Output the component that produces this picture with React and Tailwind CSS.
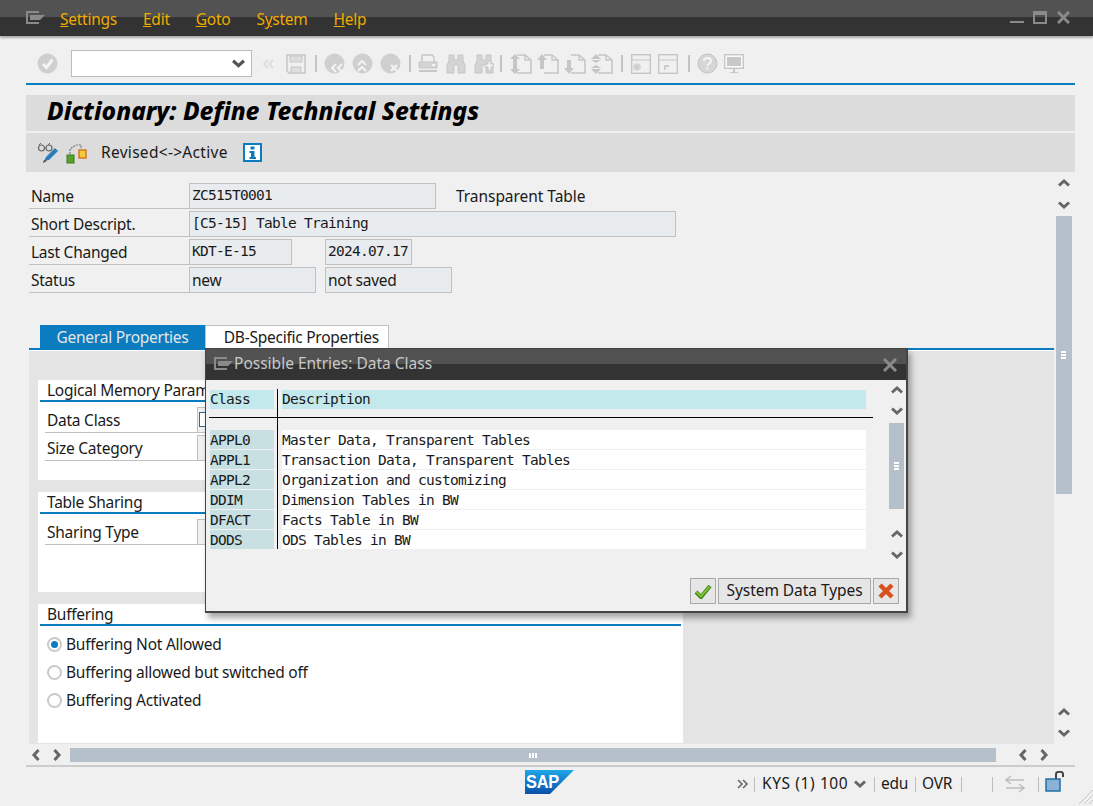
const MenuIcon = ({ className }) => (
  <svg width="19" height="13" viewBox="0 0 19 13" className={className}>
    <path d="M0 0h13v2H2v9h11v2H0z" fill="#8a8a8a" />
    <path d="M4 4h15l-5 5H4z" fill="#8a8a8a" />
  </svg>
);

const Chevron = ({ dir = "down", color = "#666666", size = 12 }) => {
  const pts = {
    down: "1,3.500 6,8 11,3.500",
    up: "1,8.500 6,4 11,8.500",
    left: "8.500,1 4,6 8.500,11",
    right: "3.500,1 8,6 3.500,11",
  };
  return (
    <svg width={size} height={size} viewBox="0 0 12 12">
      <polyline points={pts[dir]} fill="none" stroke={color} strokeWidth="3" />
    </svg>
  );
};

const Sep = () => <div className="w-[2px] h-[17px] bg-[#c4c4c4]" />;

const Gy = "#c6c6c6";

const Circle = ({ children }) => (
  <svg width="21" height="21" viewBox="0 0 21 21">
    <circle cx="10.5" cy="10.5" r="10" fill="#cfcfcf" />
    {children}
  </svg>
);

const Page = ({ children }) => (
  <svg width="22" height="20" viewBox="0 0 22 20">
    <path d="M7 1h8l6 5v13H7" fill="none" stroke={Gy} strokeWidth="1.6" />
    <path d="M15 1v5h6" fill="none" stroke={Gy} strokeWidth="1.4" />
    {children}
  </svg>
);

const Binoc = ({ plus }) => (
  <svg width="20" height="20" viewBox="0 0 20 20">
    <path d="M3 1h5v5h4V1h5v6l2 4v8h-7v-8H8v8H1v-8l2-4z" fill="#d4d4d4" stroke={Gy} strokeWidth="1" />
    {plus && <path d="M11 10h3V7h3v3h3v3h-3v4h-3v-4h-3z" fill="#f0f0f0" stroke={Gy} />}
  </svg>
);

const Window = ({ children }) => (
  <svg width="20" height="20" viewBox="0 0 20 20">
    <rect x="0.7" y="0.7" width="18.6" height="18.6" fill="none" stroke={Gy} strokeWidth="1.4" />
    <path d="M1 6h18" stroke={Gy} />
    {children}
  </svg>
);

const Toolbar = () => (
  <div className="h-[49px] border-b-2 border-[#0a7cbf] flex items-center pt-[8px]">
    <div className="ml-[11px] w-[21px]">
      <Circle>
        <polyline points="6,11 9.5,14.5 15.5,6.5" fill="none" stroke="#f4f4f4" strokeWidth="3" />
      </Circle>
    </div>
    <div className="ml-[13px] w-[181px] h-[27px] bg-white border border-[#bcbcbc] flex items-center justify-end pr-[6px]">
      <Chevron color="#555555" size={13} />
    </div>
    <div className="ml-[11px] w-[12px] text-center">
      <svg width="12" height="10" viewBox="0 0 12 10">
        <path d="M5 1 1 5l4 4M10 1 6 5l4 4" fill="none" stroke="#dcdcdc" strokeWidth="2" />
      </svg>
    </div>
    <div className="ml-[11px] w-[20px]">
      <svg width="20" height="20" viewBox="0 0 20 20">
        <path d="M1 1h18v18H3l-2-2z" fill="none" stroke={Gy} strokeWidth="1.5" />
        <path d="M4 2h12v6H4zM5 13h10v6H5z" fill="#dedede" stroke={Gy} />
      </svg>
    </div>
    <div className="ml-[9px]"><Sep /></div>
    <div className="ml-[7px] flex gap-[7px]">
      <Circle><path d="M12 11l-4 4 4 4M18 11l-4 4 4 4" fill="none" stroke="#f4f4f4" strokeWidth="2" /></Circle>
      <Circle><path d="M6 12l4-4 4 4M6 18l4-4 4 4" fill="none" stroke="#f4f4f4" strokeWidth="2" /></Circle>
      <Circle><path d="M11 12l6 6M17 12l-6 6" fill="none" stroke="#f4f4f4" strokeWidth="2.4" /></Circle>
    </div>
    <div className="ml-[8px]"><Sep /></div>
    <div className="ml-[7px]">
      <svg width="20" height="20" viewBox="0 0 20 20">
        <path d="M4 8V1h10l2 2v5" fill="none" stroke={Gy} strokeWidth="1.4" />
        <path d="M1 8h18v6H1z" fill="#d4d4d4" stroke={Gy} />
        <path d="M1 17h18" stroke={Gy} strokeWidth="2" />
        <rect x="14" y="10" width="3" height="2" fill="#f4f4f4" />
      </svg>
    </div>
    <div className="ml-[8px] flex gap-[8px]">
      <Binoc />
      <Binoc plus />
    </div>
    <div className="ml-[6px]"><Sep /></div>
    <div className="ml-[8px] flex gap-[5px]">
      <Page><path d="M5 0 0 5h3v10H0l5 5 5-5H7V5h3z" fill={Gy} /></Page>
      <Page><path d="M5 0 0 6h3v9h4V6h3z" fill={Gy} /></Page>
      <Page><path d="M5 20 0 14h3V6h4v8h3z" fill={Gy} /></Page>
      <Page><path d="M5 0 0 5h10zM5 9 0 6h10zM5 11 0 14h10zM5 20 0 15h10z" fill={Gy} /></Page>
    </div>
    <div className="ml-[8px]"><Sep /></div>
    <div className="ml-[8px] flex gap-[7px]">
      <Window><path d="M6 9v8M2 13h8M3 10l6 6M9 10l-6 6" stroke="#cccccc" strokeWidth="1.4" /></Window>
      <Window><path d="M7 16v-4h4M7 12l3 0" fill="none" stroke="#cccccc" strokeWidth="1.8" /></Window>
    </div>
    <div className="ml-[10px]"><Sep /></div>
    <div className="ml-[7px]">
      <svg width="21" height="21" viewBox="0 0 21 21">
        <circle cx="10.5" cy="10.5" r="9.5" fill="#d6d6d6" stroke="#c2c2c2" />
        <path d="M7 8c0-4 7-4 7 0 0 3-3.500 2.500-3.500 5" fill="none" stroke="#f4f4f4" strokeWidth="2" />
        <rect x="9.500" y="14.500" width="2" height="2" fill="#f4f4f4" />
      </svg>
    </div>
    <div className="ml-[6px]">
      <svg width="20" height="20" viewBox="0 0 20 20">
        <rect x="0.700" y="0.700" width="18.600" height="13.600" fill="#fafafa" stroke={Gy} strokeWidth="1.400" />
        <rect x="3" y="3" width="14" height="9" fill="#c8c8c8" />
        <path d="M9 15h2v3h3v1H6v-1h3z" fill={Gy} />
      </svg>
    </div>
  </div>
);

const AppToolbar = () => (
  <div className="h-[39px] bg-[#dcdcdc] flex items-center">
    <div className="ml-[12px]">
      <svg width="21" height="22" viewBox="0 0 21 22">
        <circle cx="3.500" cy="6" r="3" fill="none" stroke="#666666" strokeWidth="1.200" />
        <circle cx="11" cy="6" r="3" fill="none" stroke="#666666" strokeWidth="1.200" />
        <path d="M6.500 5.500h1.500M1 3l2-2M10 3l2-2" stroke="#666666" />
        <path d="M6 19l2-4 9-9 3 3-9 9z" fill="#2a7fb8" />
        <path d="M5 21l1-3 3 1z" fill="#444444" />
      </svg>
    </div>
    <div className="ml-[7px]">
      <svg width="21" height="22" viewBox="0 0 21 22">
        <rect x="1" y="13" width="7" height="8" fill="#5aa02c" stroke="#3b7a1a" />
        <rect x="13" y="8" width="7" height="8" fill="#f7c93e" stroke="#d9701a" strokeWidth="1.400" />
        <path d="M4 12V7l6-4h5v4" fill="none" stroke="#777777" strokeWidth="1.200" strokeDasharray="2 1" />
      </svg>
    </div>
    <span className="ml-[14px] w-[128px] tracking-[0.3px] text-[#1a1a1a]">Revised&lt;-&gt;Active</span>
    <div className="ml-[14px]">
      <svg width="19" height="19" viewBox="0 0 19 19">
        <rect x="1" y="1" width="17" height="17" fill="#ffffff" stroke="#0a7cbf" strokeWidth="2" />
        <path d="M7.500 3.500h4v3h-4zM6.500 8h5v6h1.500v2H6.500v-2H8v-4H6.500z" fill="#0a7cbf" />
      </svg>
    </div>
  </div>
);

const Field = ({ className, children, mono }) => (
  <div
    className={`h-[26px] bg-[#e9ecef] border border-[#c0c0c0] flex items-center pl-[2px] text-[#1a1a1a] ${
      mono ? "font-['DejaVu_Sans_Mono'] text-[14.500px] tracking-[-0.73px]" : "pt-[2px]"
    } ${className}`}
  >
    {children}
  </div>
);

const Label = ({ children, className = "w-[160px]" }) => (
  <div className={`h-[26px] border-b border-[#c0c0c0] flex items-center pl-[2px] pt-[3px] text-[#1a1a1a] ${className}`}>
    {children}
  </div>
);

const Group = ({ title, className, children }) => (
  <div className={`ml-[9px] w-[645px] bg-white ${className}`}>
    <div className="h-[20px] pl-[9px] pt-[2px] flex items-center text-[#1a1a1a] whitespace-nowrap">{title}</div>
    <div className="ml-[2px] mr-[2px] h-[2px] bg-[#0a7cbf]" />
    {children}
  </div>
);

const GroupRow = ({ label, children }) => (
  <div className="ml-[7px] mb-[2px] flex">
    <Label className="w-[152px] pl-[2px]">{label}</Label>
    <div className="w-[20px] h-[26px] bg-[#f0f0f0] border border-[#c0c0c0]">{children}</div>
  </div>
);

const Radio = ({ on, children }) => (
  <div className="h-[28px] pl-[9px] flex items-center text-[#1a1a1a]">
    <span className="w-[15px] h-[15px] rounded-full border-2 border-[#c9c9c9] bg-white flex items-center justify-center">
      {on && <span className="w-[7px] h-[7px] rounded-full bg-[#0a7cbf]" />}
    </span>
    <span className="ml-[4px] pt-[2px]">{children}</span>
  </div>
);

const MainForm = () => (
  <div className="w-[1028px] h-[572px] overflow-hidden">
    <div className="pt-[11px] pl-[3px] flex flex-col gap-[2px]">
      <div className="flex items-center">
        <Label>Name</Label>
        <Field mono className="w-[247px]">ZC515T0001</Field>
        <span className="ml-[20px] pt-[2px] tracking-[-0.05px] text-[#1a1a1a]">Transparent Table</span>
      </div>
      <div className="flex">
        <Label>Short Descript.</Label>
        <Field mono className="w-[487px]">[C5-15] Table Training</Field>
      </div>
      <div className="flex">
        <Label>Last Changed</Label>
        <Field mono className="w-[103px]">KDT-E-15</Field>
        <Field mono className="ml-[33px] w-[87px]">2024.07.17</Field>
      </div>
      <div className="flex">
        <Label>Status</Label>
        <Field className="w-[127px]">new</Field>
        <Field className="ml-[9px] w-[127px]">not saved</Field>
      </div>
    </div>
    <div className="mt-[32px] ml-[14px] flex h-[23px]">
      <div className="w-[165px] pt-[2px] bg-[#0a7cbf] text-[#e6e6e6] flex items-center justify-center">General Properties</div>
      <div className="w-[184px] pt-[2px] pr-[9px] bg-white border border-b-0 border-[#c0c0c0] text-[#1a1a1a] flex items-center justify-end">DB-Specific Properties</div>
    </div>
    <div className="ml-[3px] w-[1025px] h-[396px] bg-[#e4e4e4] border-t-2 border-[#0a7cbf]">
      <div className="h-[1px] bg-white" />
      <div className="pt-[29px]">
        <Group title="Logical Memory Param" className="h-[100px]">
          <div className="h-[5px]" />
          <GroupRow label="Data Class">
            <div className="mt-[4px] ml-[1px] w-[7px] h-[15px] border border-[#2f6a94] bg-white" />
          </GroupRow>
          <GroupRow label="Size Category" />
        </Group>
        <Group title="Table Sharing" className="h-[100px] mt-[12px]">
          <div className="h-[5px]" />
          <GroupRow label="Sharing Type" />
        </Group>
        <Group title="Buffering" className="h-[139px] mt-[12px]">
          <div className="h-[4px]" />
          <Radio on>Buffering Not Allowed</Radio>
          <Radio>Buffering allowed but switched off</Radio>
          <Radio>Buffering Activated</Radio>
        </Group>
      </div>
    </div>
  </div>
);

const VScroll = () => (
  <div className="ml-[2px] w-[15px] h-[572px] flex flex-col items-center pt-[5px]">
    <Chevron dir="up" />
    <div className="mt-[10px]"><Chevron /></div>
    <div className="mt-[5px] w-[16px] h-[278px] bg-[#b6c0ca] flex flex-col items-center justify-center gap-[1px]">
      <span className="w-[5px] h-[2px] bg-white" />
      <span className="w-[5px] h-[2px] bg-white" />
      <span className="w-[5px] h-[2px] bg-white" />
    </div>
    <div className="mt-auto mb-[5px] flex flex-col items-center gap-[9px]">
      <Chevron dir="up" />
      <Chevron />
    </div>
  </div>
);

const HScroll = () => (
  <div className="mt-[4px] h-[14px] flex items-center">
    <div className="ml-[4px] w-[40px] flex gap-[9px]">
      <Chevron dir="left" />
      <Chevron dir="right" />
    </div>
    <div className="w-[926px] h-[14px] bg-[#b6c0ca] flex items-center justify-center gap-[1px]">
      <span className="w-[2px] h-[5px] bg-white" />
      <span className="w-[2px] h-[5px] bg-white" />
      <span className="w-[2px] h-[5px] bg-white" />
    </div>
    <div className="ml-[21px] flex gap-[9px]">
      <Chevron dir="left" />
      <Chevron dir="right" />
    </div>
  </div>
);

const entries = [
  ["APPL0", "Master Data, Transparent Tables"],
  ["APPL1", "Transaction Data, Transparent Tables"],
  ["APPL2", "Organization and customizing"],
  ["DDIM", "Dimension Tables in BW"],
  ["DFACT", "Facts Table in BW"],
  ["DODS", "ODS Tables in BW"],
];

const Dialog = () => (
  <div className="absolute left-[205px] top-[348px] w-[703px] h-[265px] bg-[#f0f0f0] border border-[#444444] border-r-2 border-b-2 shadow-[3px_5px_6px_rgba(0,0,0,0.35)]">
    <div className="h-[31px] bg-[linear-gradient(to_bottom,#525252_15px,#333333_15px)] flex items-center pl-[8px] pr-[9px]">
      <MenuIcon className="-mt-[2px]" />
      <span className="ml-[1px] -mt-[2px] tracking-normal text-[#c8c8c8]">Possible Entries: Data Class</span>
      <svg width="14" height="14" viewBox="0 0 14 14" className="ml-auto mt-[1px]">
        <path d="M1 1l12 12M13 1 1 13" stroke="#8a8a8a" strokeWidth="3" />
      </svg>
    </div>
    <div className="flex">
      <div className="w-[668px] relative font-['DejaVu_Sans_Mono'] text-[14.500px] tracking-[-0.73px] text-[#1a1a1a] pl-[4px] pt-[10px]">
        <div className="flex h-[19px] leading-[19px]">
          <div className="w-[64px] bg-[#c4e9ec]">Class</div>
          <div className="ml-[8px] w-[584px] bg-[#c4e9ec]">Description</div>
        </div>
        <div className="mt-[8px] h-[1px] w-[664px] bg-black -ml-[1px]" />
        <div className="h-[12px]" />
        {entries.map(([k, d]) => (
          <div key={k} className="flex h-[20px] leading-[20px]">
            <div className="w-[64px] h-[19px] bg-[#c8e0e2]">{k}</div>
            <div className="ml-[8px] w-[584px] h-[19px] bg-white">{d}</div>
          </div>
        ))}
        <div className="absolute left-[71px] top-[9px] w-[1px] h-[160px] bg-black" />
      </div>
      <div className="ml-[15px] w-[15px] flex flex-col items-center pt-[4px]">
        <Chevron dir="up" />
        <div className="mt-[9px]"><Chevron /></div>
        <div className="mt-[6px] w-[15px] h-[86px] bg-[#b6c0ca] flex flex-col items-center justify-center gap-[1px]">
          <span className="w-[5px] h-[2px] bg-white" />
          <span className="w-[5px] h-[2px] bg-white" />
          <span className="w-[5px] h-[2px] bg-white" />
        </div>
        <div className="mt-[19px]"><Chevron dir="up" /></div>
        <div className="mt-[9px]"><Chevron /></div>
      </div>
    </div>
    <div className="absolute right-[7px] bottom-[7px] flex gap-[2px] h-[26px]">
      <div className="w-[26px] bg-[#e6e6e6] border border-[#a8a8a8] flex items-center justify-center">
        <svg width="18" height="16" viewBox="0 0 18 16">
          <path d="M2 9l5 5L16 3" fill="none" stroke="#3f7d18" strokeWidth="4" />
          <path d="M2.500 9l4.500 4.500L15.500 3.500" fill="none" stroke="#7cc238" strokeWidth="2.200" />
        </svg>
      </div>
      <div className="w-[153px] bg-[#e6e6e6] border border-[#a8a8a8] flex items-center justify-center tracking-[-0.05px] text-[#1a1a1a]">System Data Types</div>
      <div className="w-[26px] bg-[#e6e6e6] border border-[#a8a8a8] flex items-center justify-center">
        <svg width="16" height="16" viewBox="0 0 16 16">
          <path d="M2 2l12 12M14 2 2 14" stroke="#d9501e" strokeWidth="4.400" />
        </svg>
      </div>
    </div>
  </div>
);

const StatusSep = ({ className }) => <div className={`w-[1px] h-[15px] bg-[#bdbdbd] ${className}`} />;

const StatusBar = () => (
  <div className="mt-[3px] h-[39px] border-t-2 border-[#cccccc] relative flex items-start text-[#1a1a1a]">
    <div className="ml-[499px] mt-[3px]">
      <svg width="49" height="24" viewBox="0 0 49 24">
        <defs>
          <linearGradient id="sapg" x1="0" y1="0" x2="0" y2="1">
            <stop offset="0" stopColor="#1ea7e8" />
            <stop offset="1" stopColor="#0a4fa8" />
          </linearGradient>
        </defs>
        <path d="M0 0h49L25 24H0z" fill="url(#sapg)" />
        <text x="1" y="18" fontFamily="Liberation Sans" fontWeight="700" fontSize="18" textLength="33" lengthAdjust="spacingAndGlyphs" fill="#ffffff">SAP</text>
      </svg>
    </div>
    <div className="ml-[163px] mt-[7px] h-[20px] flex items-center">
      <svg width="12" height="10" viewBox="0 0 12 10">
        <path d="M1 1l4 4-4 4M6 1l4 4-4 4" fill="none" stroke="#666666" strokeWidth="1.600" />
      </svg>
      <StatusSep className="ml-[5px]" />
      <span className="ml-[7px] w-[86px] whitespace-nowrap tracking-[0.6px]">KYS (1) 100</span>
      <div className="ml-[6px]"><Chevron size={12} /></div>
      <StatusSep className="ml-[8px]" />
      <span className="ml-[6px] w-[25px]">edu</span>
      <StatusSep className="ml-[9px]" />
      <span className="ml-[6px] w-[33px]">OVR</span>
      <StatusSep className="ml-[6px]" />
      <StatusSep className="ml-[30px]" />
      <svg width="20" height="18" viewBox="0 0 20 18" className="ml-[12px]">
        <path d="M6 1 1 5l5 4M1 5h18M14 9l5 4-5 4M19 13H1" fill="none" stroke="#bdbdbd" strokeWidth="1.500" />
      </svg>
      <StatusSep className="ml-[13px]" />
      <svg width="20" height="22" viewBox="0 0 20 22" className="ml-[6px] -mt-[4px]">
        <path d="M11 8V3c0-3 7-3 7 0v3" fill="none" stroke="#444444" strokeWidth="2" />
        <rect x="1" y="8" width="14" height="12" fill="#8ab2d6" stroke="#1f6fa8" strokeWidth="1.500" />
      </svg>
    </div>
    <svg width="14" height="16" viewBox="0 0 14 16" className="absolute -right-[18px] bottom-0">
      <path d="M0 16 14 2M5 16 14 7M10 16l4-4" stroke="#c4c4c4" strokeWidth="1" />
    </svg>
  </div>
);

export default function App() {
  return (
    <div className="relative w-[1093px] h-[806px] overflow-hidden bg-[#f0f0f0] font-['Noto_Sans',sans-serif] text-[15.500px] tracking-[-0.25px]">
      <div className="h-[36px] bg-[linear-gradient(to_bottom,#525252_17px,#333333_17px)] shadow-[0_2px_2px_rgba(0,0,0,0.3)] flex items-center pl-[26px] relative">
        <MenuIcon className="-mt-[2px]" />
        <div className="ml-[15px] mt-[4px] flex gap-[26px] text-[#f0ab00]">
          <span><u>S</u>ettings</span>
          <span><u>E</u>dit</span>
          <span><u>G</u>oto</span>
          <span>S<u>y</u>stem</span>
          <span><u>H</u>elp</span>
        </div>
        <div className="ml-auto mr-[23px] flex items-center gap-[9px]">
          <div className="w-[14px] h-[2px] bg-[#8a8a8a] mt-[8px]" />
          <div className="w-[14px] h-[13px] border-2 border-t-[4px] border-[#8a8a8a] -mt-[2px]" />
          <svg width="13" height="13" viewBox="0 0 13 13" className="ml-[1px] -mt-[2px]">
            <path d="M1 1l11 11M12 1 1 12" stroke="#8a8a8a" strokeWidth="3" />
          </svg>
        </div>
      </div>
      <div className="ml-[26px] w-[1049px]">
        <Toolbar />
        <div className="mt-[10px] h-[36px] bg-[#dcdcdc] pl-[21px] flex items-center">
          <span className="-mt-[3px] font-extrabold italic text-[24.500px] tracking-normal text-black">Dictionary: Define Technical Settings</span>
        </div>
        <div className="h-[2px]" />
        <AppToolbar />
        <div className="flex">
          <MainForm />
          <VScroll />
        </div>
        <HScroll />
        <StatusBar />
      </div>
      <Dialog />
    </div>
  );
}
